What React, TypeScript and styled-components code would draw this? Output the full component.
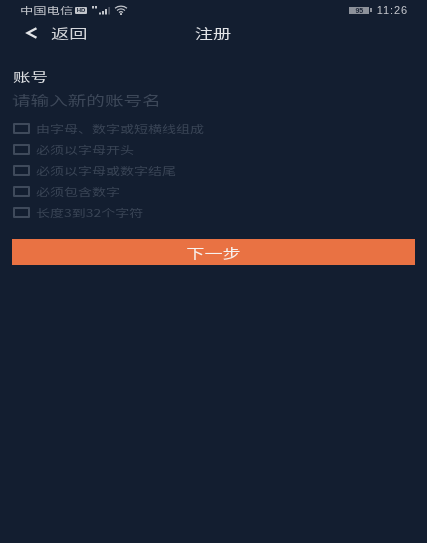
import React from 'react';
import styled, { createGlobalStyle } from 'styled-components';

const GlobalStyle = createGlobalStyle`
  html, body {
    margin: 0;
    padding: 0;
    background: #131e30;
  }
  * {
    box-sizing: border-box;
  }
`;

const Screen = styled.div`
  display: flex;
  flex-direction: column;
  width: 427px;
  height: 543px;
  overflow: hidden;
  background: #131e30;
  font-family: "Noto Sans CJK SC", "Liberation Sans", sans-serif;
  filter: blur(0.3px); /* the reference is a soft, upscaled capture */
`;

// the reference is stretched sideways, so the CJK text is too
const Wide = styled.span<{ $origin?: string }>`
  display: inline-block;
  transform: scaleX(1.4);
  transform-origin: ${(p) => p.$origin || 'left'} center;
`;

const StatusBar = styled.div`
  display: flex;
  justify-content: space-between;
  align-items: center;
  height: 20px;
  padding: 0 19px 0 20px;
  color: #b4b8bf;
`;

const StatusGroup = styled.div`
  display: flex;
  align-items: center;
`;

const Carrier = styled.span`
  width: 55px;
  font-size: 9.5px;
  white-space: nowrap;
  color: #c2c5cb;
`;

const HdBadge = styled.span`
  width: 12px;
  height: 7px;
  margin-right: 5px;
  border-radius: 1px;
  background: #c2c5cb;
  color: #141f31;
  font-family: "Liberation Sans", sans-serif;
  font-size: 6px;
  font-weight: 700;
  line-height: 7px;
  text-align: center;
`;

const Battery = styled.span`
  width: 20px;
  height: 7px;
  background: #8d929b;
  color: #1d2637;
  font-family: "Liberation Sans", sans-serif;
  font-size: 7px;
  font-weight: 700;
  line-height: 7px;
  text-align: center;
`;

const BatteryTip = styled.span`
  width: 1.5px;
  height: 4px;
  margin-left: 1px;
  background: #8d929b;
`;

const Clock = styled.span`
  margin-left: 5px;
  font-family: "Liberation Sans", sans-serif;
  font-size: 11px;
  letter-spacing: 0.9px;
  color: #c2c5cb;
`;

const NavBar = styled.div`
  display: grid;
  grid-template-columns: 1fr auto 1fr;
  align-items: center;
  height: 25px;
  padding: 0 25px;
`;

const BackLink = styled.div`
  display: flex;
  align-items: center;
  gap: 13px;
  color: #d6d8dc;
  font-size: 13px;
`;

const BackText = styled.span`
  width: 26px;
  white-space: nowrap;
`;

const NavTitle = styled.div`
  color: #e2e4e7;
  font-size: 13px;
`;

const Form = styled.div`
  display: flex;
  flex-direction: column;
  padding: 23px 12px 0;
`;

const FieldLabel = styled.div`
  padding-left: 1px;
  color: #dfe1e4;
  font-size: 12.5px;
  line-height: 18px;
`;

const AccountInput = styled.input`
  width: 288px;
  height: 20px;
  margin-top: 3px;
  padding: 0;
  border: none;
  outline: none;
  background: transparent;
  color: #dfe1e4;
  font-family: inherit;
  font-size: 13px;
  transform: scaleX(1.43);
  transform-origin: left center;
  &::placeholder {
    color: #3d4859;
    opacity: 1;
  }
`;

const RuleList = styled.div`
  display: flex;
  flex-direction: column;
  gap: 7px;
  margin-top: 12.5px;
`;

const Rule = styled.div`
  display: flex;
  align-items: center;
  gap: 6px;
  height: 14px;
  padding-left: 1px;
`;

const RuleBox = styled.span`
  width: 17px;
  height: 11px;
  border: 2px solid #3f4a5b;
  border-radius: 1px;
`;

const RuleText = styled.span`
  color: #3a4556;
  font-size: 10px;
  white-space: nowrap;
`;

const NextButton = styled.button`
  width: 403px;
  height: 26px;
  margin-top: 19.5px;
  border: none;
  border-radius: 0;
  background: #e97243;
  color: #f7f2ef;
  font-family: inherit;
  font-size: 13px;
`;

const rules = [
  '由字母、数字或短横线组成',
  '必须以字母开头',
  '必须以字母或数字结尾',
  '必须包含数字',
  '长度3到32个字符',
];

const App: React.FC = () => {
  return (
    <Screen>
      <GlobalStyle />

      {/* Status bar */}
      <StatusBar>
        <StatusGroup>
          <Carrier>
            <Wide>中国电信</Wide>
          </Carrier>
          <HdBadge>HD</HdBadge>
          <svg width="18" height="9" viewBox="0 0 18 9" fill="#c2c5cb">
            <rect x="0" y="0" width="2" height="2.5" />
            <rect x="3" y="0" width="2" height="2.5" />
            <rect x="7" y="6.5" width="2" height="2" />
            <rect x="10" y="5" width="2" height="3.5" />
            <rect x="13" y="3" width="2" height="5.5" />
            <rect x="16.4" y="1" width="1.4" height="7.5" fill="#5b6370" />
          </svg>
          <svg width="14" height="10" viewBox="0 0 14 10" fill="none" stroke="#c2c5cb" strokeWidth="1.2" style={{ marginLeft: 4 }}>
            <path d="M1 3.2C4.5 0.4 9.5 0.4 13 3.2" />
            <path d="M3 5.4C5.4 3.6 8.6 3.6 11 5.4" />
            <path d="M5 7.4C6.2 6.5 7.8 6.5 9 7.4" />
            <circle cx="7" cy="9" r="0.5" fill="#c2c5cb" />
          </svg>
        </StatusGroup>
        <StatusGroup>
          <Battery>95</Battery>
          <BatteryTip />
          <Clock>11:26</Clock>
        </StatusGroup>
      </StatusBar>

      {/* Nav */}
      <NavBar>
        <BackLink>
          <svg width="13" height="12" viewBox="0 0 13 12" fill="none" stroke="#e2e4e7" strokeWidth="2.4">
            <path d="M11.5 1.2L2.6 6L11.5 10.8" />
          </svg>
          <BackText>
            <Wide>返回</Wide>
          </BackText>
        </BackLink>
        <NavTitle>
          <Wide $origin="center">注册</Wide>
        </NavTitle>
        <span />
      </NavBar>

      {/* Form */}
      <Form>
        <FieldLabel>
          <Wide>账号</Wide>
        </FieldLabel>
        <AccountInput placeholder="请输入新的账号名" readOnly />
        <RuleList>
          {rules.map((rule) => (
            <Rule key={rule}>
              <RuleBox />
              <RuleText>
                <Wide>{rule}</Wide>
              </RuleText>
            </Rule>
          ))}
        </RuleList>
        <NextButton>
          <Wide $origin="center">下一步</Wide>
        </NextButton>
      </Form>
    </Screen>
  );
};

export default App;
